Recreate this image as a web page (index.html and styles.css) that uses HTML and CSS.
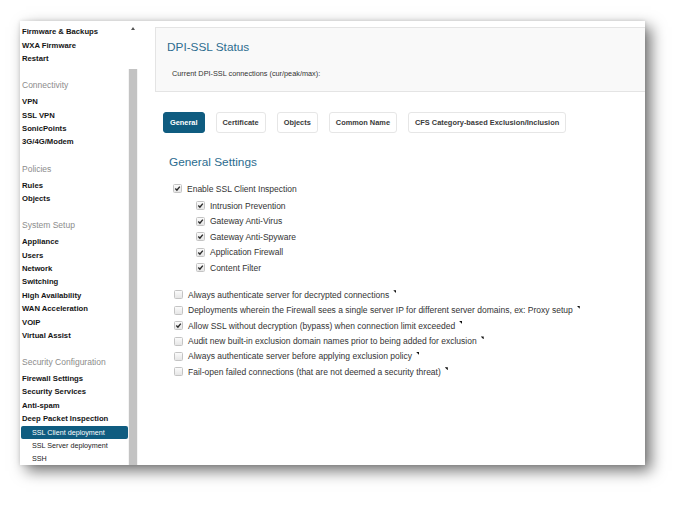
FILE: index.html
```html
<!DOCTYPE html>
<html>
<head>
<meta charset="utf-8">
<link rel="stylesheet" href="styles.css">
</head>
<body>
<div class="frame">
  <nav class="sidebar">
    <div class="group first">
      <div class="item">Firmware &amp; Backups</div>
      <div class="item">WXA Firmware</div>
      <div class="item">Restart</div>
    </div>
    <div class="group">
      <div class="head">Connectivity</div>
      <div class="item">VPN</div>
      <div class="item">SSL VPN</div>
      <div class="item">SonicPoints</div>
      <div class="item">3G/4G/Modem</div>
    </div>
    <div class="group">
      <div class="head">Policies</div>
      <div class="item">Rules</div>
      <div class="item">Objects</div>
    </div>
    <div class="group">
      <div class="head">System Setup</div>
      <div class="item">Appliance</div>
      <div class="item">Users</div>
      <div class="item">Network</div>
      <div class="item">Switching</div>
      <div class="item">High Availability</div>
      <div class="item">WAN Acceleration</div>
      <div class="item">VOIP</div>
      <div class="item">Virtual Assist</div>
    </div>
    <div class="group">
      <div class="head">Security Configuration</div>
      <div class="item">Firewall Settings</div>
      <div class="item">Security Services</div>
      <div class="item">Anti-spam</div>
      <div class="item">Deep Packet Inspection</div>
      <div class="sub selected">SSL Client deployment</div>
      <div class="sub">SSL Server deployment</div>
      <div class="sub">SSH</div>
    </div>
  </nav>
  <div class="scrollbar">
    <div class="arrow"></div>
    <div class="thumb"></div>
  </div>
  <main class="content">
    <section class="status">
      <h1 class="status-title">DPI-SSL Status</h1>
      <p class="status-line">Current DPI-SSL connections (cur/peak/max):</p>
    </section>
    <div class="tabs">
      <span class="tab active">General</span>
      <span class="tab">Certificate</span>
      <span class="tab">Objects</span>
      <span class="tab">Common Name</span>
      <span class="tab">CFS Category-based Exclusion/Inclusion</span>
    </div>
    <h2 class="settings-title">General Settings</h2>
    <div class="opts">
      <div class="row"><span class="cb on"><svg viewBox="0 0 7 7"><path d="M1.3 3.6 L2.9 5.2 L5.8 1.6"/></svg></span>Enable SSL Client Inspection</div>
      <div class="subopts">
        <div class="row"><span class="cb on"><svg viewBox="0 0 7 7"><path d="M1.3 3.6 L2.9 5.2 L5.8 1.6"/></svg></span>Intrusion Prevention</div>
        <div class="row"><span class="cb on"><svg viewBox="0 0 7 7"><path d="M1.3 3.6 L2.9 5.2 L5.8 1.6"/></svg></span>Gateway Anti-Virus</div>
        <div class="row"><span class="cb on"><svg viewBox="0 0 7 7"><path d="M1.3 3.6 L2.9 5.2 L5.8 1.6"/></svg></span>Gateway Anti-Spyware</div>
        <div class="row"><span class="cb on"><svg viewBox="0 0 7 7"><path d="M1.3 3.6 L2.9 5.2 L5.8 1.6"/></svg></span>Application Firewall</div>
        <div class="row"><span class="cb on"><svg viewBox="0 0 7 7"><path d="M1.3 3.6 L2.9 5.2 L5.8 1.6"/></svg></span>Content Filter</div>
      </div>
    </div>
    <div class="opts lower">
      <div class="row"><span class="cb"></span>Always authenticate server for decrypted connections<span class="tip"></span></div>
      <div class="row"><span class="cb"></span>Deployments wherein the Firewall sees a single server IP for different server domains, ex: Proxy setup<span class="tip"></span></div>
      <div class="row"><span class="cb on"><svg viewBox="0 0 7 7"><path d="M1.3 3.6 L2.9 5.2 L5.8 1.6"/></svg></span>Allow SSL without decryption (bypass) when connection limit exceeded<span class="tip"></span></div>
      <div class="row"><span class="cb"></span>Audit new built-in exclusion domain names prior to being added for exclusion<span class="tip"></span></div>
      <div class="row"><span class="cb"></span>Always authenticate server before applying exclusion policy<span class="tip"></span></div>
      <div class="row"><span class="cb"></span>Fail-open failed connections (that are not deemed a security threat)<span class="tip"></span></div>
    </div>
  </main>
</div>
</body>
</html>
```

FILE: styles.css
```css
html, body {
  margin: 0;
  padding: 0;
  background: #ffffff;
}
body {
  width: 687px;
  height: 507px;
  overflow: hidden;
  font-family: "Liberation Sans", Arial, sans-serif;
  padding-top: 21px;
  padding-left: 20px;
  box-sizing: border-box;
}
.frame {
  width: 625px;
  height: 444px;
  display: flex;
  background: #ffffff;
  box-shadow: 0 0 4px rgba(0,0,0,0.12), 6px 6px 14px rgba(0,0,0,0.55);
}
.sidebar {
  width: 108px;
  overflow: hidden;
  padding-top: 4.3px;
  box-sizing: border-box;
}
.group {
  margin-top: 13.8px;
}
.group.first {
  margin-top: 0;
}
.head {
  height: 13.4px;
  line-height: 13.4px;
  font-size: 8.5px;
  color: #8c8c8c;
  padding-left: 2px;
  margin-bottom: 2.6px;
  white-space: nowrap;
}
.item {
  height: 13.4px;
  line-height: 13.4px;
  font-size: 7.7px;
  font-weight: bold;
  color: #151515;
  padding-left: 2px;
  white-space: nowrap;
}
.sub {
  height: 13.4px;
  line-height: 13.4px;
  font-size: 7.2px;
  color: #222;
  padding-left: 12px;
  white-space: nowrap;
}
.sub.selected {
  background: #0f5c80;
  color: #ffffff;
  border-radius: 2px;
  margin-left: 1px;
  padding-left: 11px;
}
.scrollbar {
  width: 10px;
  display: flex;
  flex-direction: column;
  background: #f4f4f4;
}
.arrow {
  height: 48px;
  background: #ffffff;
  position: relative;
}
.arrow::after {
  content: "";
  position: absolute;
  left: 3px;
  top: 6px;
  border-left: 2.5px solid transparent;
  border-right: 2.5px solid transparent;
  border-bottom: 3px solid #555;
}
.thumb {
  flex: 1;
  background: #c3c3c3;
  margin: 0 1px;
}
.content {
  flex: 1;
  overflow: hidden;
  padding: 6px 0 0 17px;
  color: #333;
}
.status {
  background: #f9f9f9;
  border: 1px solid #e4e4e4;
  margin-right: -10px;
  padding: 11px 12px 11px 11px;
}
.status-title {
  margin: 0;
  font-size: 11.8px;
  line-height: 16px;
  font-weight: normal;
  color: #2c6c8f;
}
.status-line {
  margin: 13px 0 0 5px;
  font-size: 7.3px;
  line-height: 12px;
  color: #333;
}
.tabs {
  display: flex;
  gap: 11px;
  margin: 20px 0 0 8px;
}
.tab {
  height: 21px;
  line-height: 19px;
  box-sizing: border-box;
  padding: 0 6px;
  border: 1px solid #e6e6e6;
  border-radius: 3px;
  background: #fff;
  font-size: 7.4px;
  font-weight: bold;
  color: #3a3a3a;
  white-space: nowrap;
}
.tab.active {
  background: #0f5c80;
  border-color: #0f5c80;
  color: #fff;
}
.settings-title {
  margin: 21px 0 0 14px;
  font-size: 11.8px;
  line-height: 16px;
  font-weight: normal;
  color: #2c6c8f;
}
.opts {
  margin: 11.3px 0 0 18px;
}
.opts.lower {
  margin-top: 12px;
  margin-left: 19px;
}
.subopts {
  margin: 1.6px 0 0 23px;
}
.row {
  height: 15.4px;
  display: flex;
  align-items: center;
  font-size: 8.5px;
  color: #333;
  white-space: nowrap;
}
.cb {
  width: 7px;
  height: 7px;
  border: 1px solid #c4c4c4;
  border-radius: 1.5px;
  background: linear-gradient(#fbfbfb, #e6e6e6);
  margin-right: 5px;
  flex: none;
  display: flex;
}
.cb svg {
  width: 7px;
  height: 7px;
}
.cb svg path {
  fill: none;
  stroke: #2a2a2a;
  stroke-width: 1.4;
}
.tip {
  width: 3px;
  height: 3px;
  background: #111;
  clip-path: polygon(0 0, 100% 0, 100% 100%);
  margin-left: 4px;
  align-self: flex-start;
  margin-top: 3px;
  flex: none;
}
```
